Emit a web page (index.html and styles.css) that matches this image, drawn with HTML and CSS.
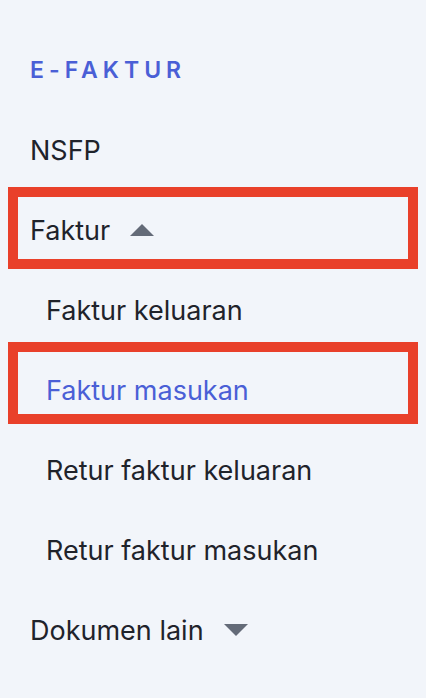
FILE: index.html
```html
<!DOCTYPE html>
<html lang="id">
<head>
<meta charset="UTF-8">
<title>E-Faktur</title>
<link rel="stylesheet" href="styles.css">
</head>
<body>

<nav class="sidebar">
  <h3 class="judul">E-FAKTUR</h3>

  <ul class="menu">
    <li class="item">NSFP</li>
    <li class="item tandai">
      Faktur
      <svg class="panah" width="24" height="12" viewBox="0 0 24 12"><path d="M0 12 L12 0 L24 12 Z"/></svg>
    </li>
    <li class="item sub">Faktur keluaran</li>
    <li class="item sub aktif tandai tandai-bawah">Faktur masukan</li>
    <li class="item sub">Retur faktur keluaran</li>
    <li class="item sub">Retur faktur masukan</li>
    <li class="item">
      Dokumen lain
      <svg class="panah" width="24" height="12" viewBox="0 0 24 12"><path d="M0 0 L24 0 L12 12 Z"/></svg>
    </li>
  </ul>
</nav>

</body>
</html>
```

FILE: styles.css
```css
body {
  margin: 0;
  background: #f2f5fa;
  font-family: Inter, "Noto Sans", sans-serif;
  color: #1f232b;
}
.sidebar {
  padding: 56px 18px 0 18px;
}
.judul {
  margin: 0 0 0 12px;
  font-size: 23px;
  font-weight: 600;
  letter-spacing: 5px;
  color: #4a5fd6;
  line-height: 28px;
}
.menu {
  list-style: none;
  margin: 0;
  padding: 0;
  margin-top: 33px;
  display: flex;
  flex-direction: column;
  gap: 18px;
}
.item {
  position: relative;
  box-sizing: border-box;
  height: 62px;
  display: flex;
  align-items: center;
  padding-top: 4px;
  padding-left: 12px;
  font-size: 27px;
}
.sub {
  padding-left: 28px;
}
.aktif {
  color: #4a5fd6;
}
.panah {
  margin-left: 20px;
  fill: #646b78;
}
.tandai::after {
  content: "";
  position: absolute;
  top: -10px;
  bottom: -10px;
  left: -10px;
  right: -10px;
  border: 10px solid #e9402a;
}
.tandai-bawah::after {
  top: -15px;
  bottom: -5px;
}
```
